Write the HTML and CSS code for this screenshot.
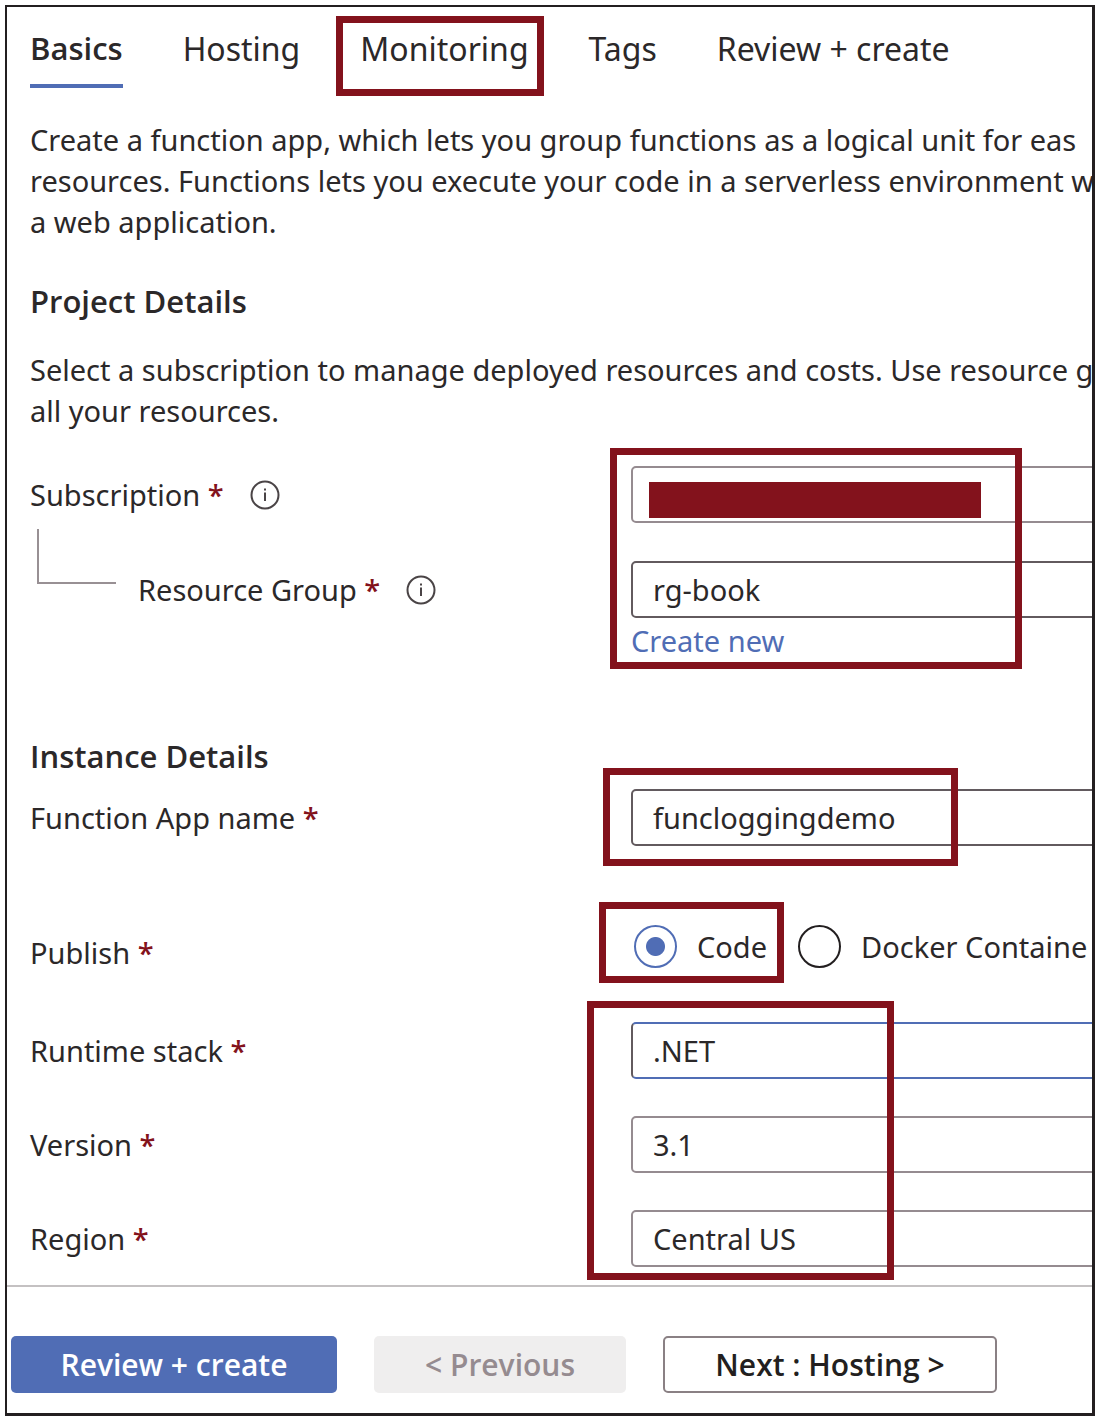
FILE: index.html
```html
<!DOCTYPE html>
<html lang="en">
<head>
<meta charset="utf-8">
<title>Create Function App</title>
<link rel="stylesheet" href="styles.css">
</head>
<body>
<main class="frame">
  <form class="content">
    <nav class="tabs">
      <a class="tab tab-active" href="#basics">Basics</a>
      <a class="tab" href="#hosting">Hosting</a>
      <a class="tab" href="#monitoring">Monitoring<span class="mark mark-tab"></span></a>
      <a class="tab" href="#tags">Tags</a>
      <a class="tab" href="#review">Review + create</a>
    </nav>

    <p class="text">Create a function app, which lets you group functions as a logical unit for eas<br>resources. Functions lets you execute your code in a serverless environment w<br>a web application.</p>

    <h2 class="heading">Project Details</h2>
    <p class="text">Select a subscription to manage deployed resources and costs. Use resource g<br>all your resources.</p>

    <section class="rows project">
      <div class="row">
        <div class="label-cell">
          <label for="subscription">Subscription <span class="required">*</span></label>
          <svg class="info" viewBox="0 0 30 30" role="img" aria-label="Info"><circle cx="15" cy="15" r="13.5"/><path d="M15 12.5V21M15 8.5v2"/></svg>
        </div>
        <div class="control">
          <select class="field" id="subscription"><option></option></select>
          <span class="redaction"></span>
          <span class="mark mark-project"></span>
        </div>
      </div>
      <div class="row">
        <div class="label-cell nested">
          <span class="branch"></span>
          <label for="group">Resource Group <span class="required">*</span></label>
          <svg class="info" viewBox="0 0 30 30" role="img" aria-label="Info"><circle cx="15" cy="15" r="13.5"/><path d="M15 12.5V21M15 8.5v2"/></svg>
        </div>
        <div class="control">
          <select class="field field-dark" id="group"><option>rg-book</option></select>
        </div>
      </div>
    </section>
    <a class="create-link" href="#new">Create new</a>

    <h2 class="heading heading-instance">Instance Details</h2>
    <section class="rows instance">
      <div class="row">
        <label class="label-cell" for="name"><span>Function App name <span class="required">*</span></span></label>
        <div class="control">
          <input class="field field-dark" id="name" type="text" value="funcloggingdemo">
          <span class="mark mark-name"></span>
        </div>
      </div>
      <div class="row publish" role="radiogroup" aria-labelledby="publish">
        <div class="label-cell" id="publish"><span>Publish <span class="required">*</span></span></div>
        <div class="control choices">
          <label class="choice"><input class="radio" type="radio" name="publish" checked>Code</label>
          <label class="choice"><input class="radio" type="radio" name="publish">Docker Containe</label>
          <span class="mark mark-code"></span>
        </div>
      </div>
      <div class="row">
        <label class="label-cell" for="stack"><span>Runtime stack <span class="required">*</span></span></label>
        <div class="control">
          <select class="field field-blue" id="stack"><option>.NET</option></select>
          <span class="mark mark-runtime"></span>
        </div>
      </div>
      <div class="row">
        <label class="label-cell" for="version"><span>Version <span class="required">*</span></span></label>
        <div class="control">
          <select class="field" id="version"><option>3.1</option></select>
        </div>
      </div>
      <div class="row">
        <label class="label-cell" for="region"><span>Region <span class="required">*</span></span></label>
        <div class="control">
          <select class="field" id="region"><option>Central US</option></select>
        </div>
      </div>
    </section>
  </form>

  <footer class="footer">
    <button class="button primary" type="button">Review + create</button>
    <button class="button previous" type="button" disabled>&lt; Previous</button>
    <button class="button next" type="button">Next : Hosting &gt;</button>
  </footer>
</main>
</body>
</html>
```
FILE: styles.css
```css
* {
  box-sizing: border-box;
}

body {
  margin: 0;
  padding: 5px;
  background: #fff;
  color: #2b2829;
  font: 29px/41px "Noto Sans", "Open Sans", sans-serif;
}

.frame {
  border: 3px solid #231f20;
  border-left-width: 2px;
  border-top-width: 2px;
  overflow: hidden;
}

.content {
  padding: 21px 0 18px 23px;
}

/* Tabs */
.tabs {
  display: flex;
  gap: 60px;
  font-size: 32px;
}

.tab {
  position: relative;
  height: 60px;
  color: inherit;
  text-decoration: none;
  white-space: nowrap;
}

.tab-active {
  border-bottom: 4px solid #506db5;
  font-family: "Open Sans", sans-serif;
  font-size: 31px;
  font-weight: 600;
}

/* Copy */
.text {
  margin: 31px 0 0;
  white-space: nowrap;
}

.heading {
  margin: 39px 0 0;
  font: 600 31px/41px "Open Sans", sans-serif;
}

.heading + .text {
  margin-top: 27px;
}

.heading-instance {
  margin-top: 75px;
}

/* Form rows */
.rows {
  display: grid;
  gap: 37px;
}

.project {
  margin-top: 35px;
  gap: 38px;
}

.instance {
  margin-top: 12px;
}

.row {
  display: grid;
  grid-template-columns: 601px 1fr;
}

.label-cell {
  position: relative;
  display: flex;
  align-items: center;
  gap: 26px;
}

.nested {
  padding-left: 108px;
}

.branch {
  position: absolute;
  left: 7px;
  bottom: 34px;
  width: 79px;
  height: 55px;
  border: solid #989094;
  border-width: 0 0 2px 2px;
}

.required {
  color: #83121c;
  font-family: "Open Sans", sans-serif;
  font-weight: 600;
}

.info {
  width: 30px;
  height: 30px;
  fill: none;
  stroke: #4a4446;
  stroke-width: 2;
}

.control {
  position: relative;
  margin-right: -12px;
}

.field {
  display: block;
  width: 100%;
  height: 57px;
  padding: 0 20px;
  border: 2px solid #958b90;
  border-radius: 5px;
  background: #fff;
  color: inherit;
  font: inherit;
  appearance: none;
}

.field-dark {
  border-color: #625a5e;
}

.field-blue {
  border-color: #506db5;
  border-left-color: #625a5e;
}

.redaction {
  position: absolute;
  left: 18px;
  top: 16px;
  width: 332px;
  height: 36px;
  background: #83121c;
}

.create-link {
  display: block;
  width: fit-content;
  margin: 2px 0 0 601px;
  color: #506db5;
  text-decoration: none;
}

.publish {
  padding: 37px 0 12px;
}

.publish .label-cell {
  padding-top: 12px;
}

.choices {
  display: flex;
  gap: 31px;
  padding-left: 3px;
}

.choice {
  display: flex;
  align-items: center;
  gap: 20px;
  white-space: nowrap;
}

.radio {
  width: 43px;
  height: 43px;
  margin: 0;
  border: 2px solid #231f20;
  border-radius: 50%;
  appearance: none;
}

.radio:checked {
  border-color: #506db5;
  background: radial-gradient(circle, #506db5 9px, #fff 10px);
}

/* Red callout boxes laid over the form */
.mark {
  position: absolute;
  z-index: 1;
  border: 7px solid #83121c;
  pointer-events: none;
}

.mark-tab {
  inset: -12px -15px -8px -24px;
}

.mark-project {
  left: -21px;
  top: -18px;
  width: 412px;
  height: 221px;
}

.mark-name {
  left: -28px;
  top: -21px;
  width: 355px;
  height: 98px;
}

.mark-code {
  left: -32px;
  top: -18px;
  width: 185px;
  height: 81px;
}

.mark-runtime {
  left: -44px;
  top: -21px;
  width: 307px;
  height: 279px;
}

/* Footer */
.footer {
  display: flex;
  gap: 37px;
  padding: 49px 4px 20px;
  border-top: 2px solid #c4c1c2;
}

.button {
  height: 57px;
  padding: 0;
  border: 0;
  border-radius: 5px;
  font: 600 30px/41px "Open Sans", sans-serif;
}

.primary {
  width: 326px;
  background: #506db5;
  color: #fff;
}

.previous {
  width: 252px;
  background: #efeeee;
  color: #958b90;
}

.next {
  width: 334px;
  border: 2px solid #8a8084;
  background: #fff;
  color: #231f20;
}
```
